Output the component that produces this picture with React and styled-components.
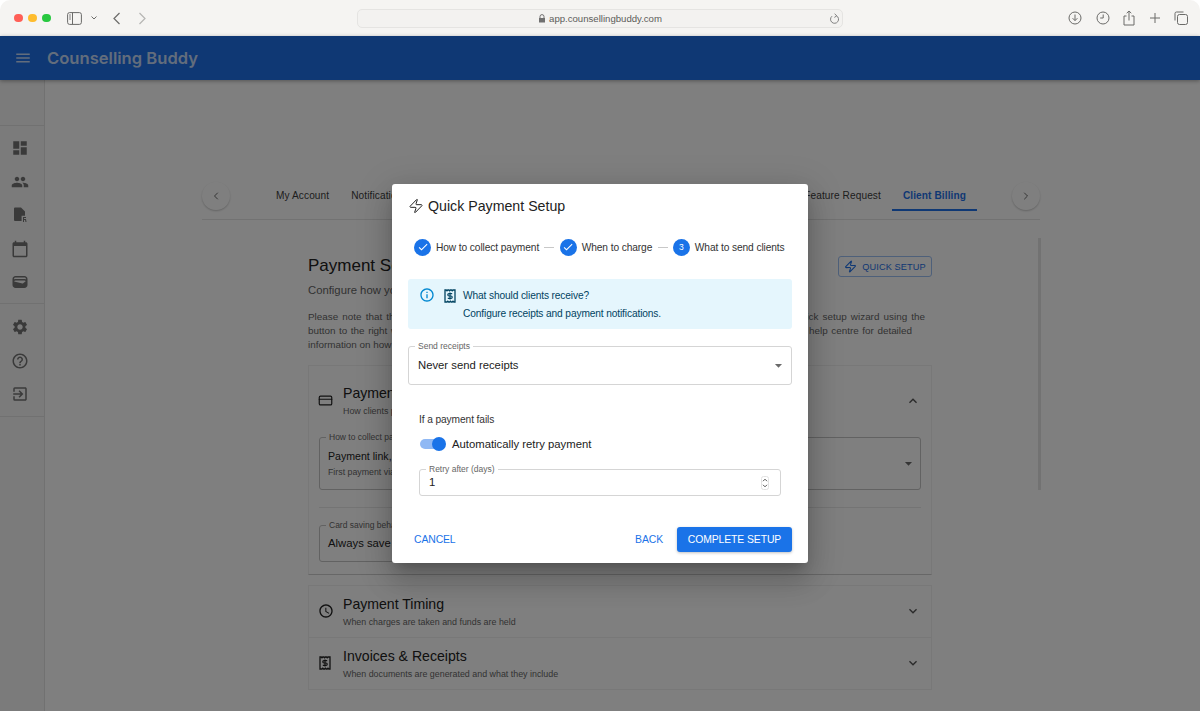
import styled, { createGlobalStyle } from 'styled-components';
import {
  MdDashboard,
  MdPeople,
  MdCalendarToday,
  MdWallet,
  MdSettings,
  MdHelpOutline,
  MdOutlineExitToApp,
  MdAccessTime,
  MdMenu,
  MdCheck,
  MdExpandMore,
  MdExpandLess,
  MdArrowDropDown,
  MdInfoOutline,
} from 'react-icons/md';
import { Zap, ChevronLeft, ChevronRight, CreditCard } from 'lucide-react';

const GlobalStyle = createGlobalStyle`
  html, body {
    margin: 0;
    padding: 0;
    background: #fff;
    overflow: hidden;
  }
  * { box-sizing: border-box; }
`;

const Window = styled.div`
  position: relative;
  width: 1200px;
  height: 711px;
  overflow: hidden;
  display: flex;
  flex-direction: column;
  font-family: "Liberation Sans", Arial, sans-serif;
  color: #222;
`;

/* safari chrome */
const Toolbar = styled.div`
  height: 36px;
  flex: none;
  display: grid;
  grid-template-columns: 357px 486px 357px;
  align-items: center;
  background: #f5f4f2;
  border-radius: 10px 10px 0 0;
`;

const ToolbarLeft = styled.div`
  display: flex;
  align-items: center;
  padding-left: 14px;
`;

const Dot = styled.span`
  width: 8.5px;
  height: 8.5px;
  border-radius: 50%;
  margin-right: 5.5px;
  background: ${props => props.color};
`;

const ChromeIcon = styled.svg`
  display: block;
  flex: none;
  margin-left: ${props => props.$left || 0}px;
  color: ${props => props.$faded ? '#b5b5b3' : '#6b6b69'};
`;

const UrlBar = styled.div`
  position: relative;
  height: 19px;
  display: flex;
  align-items: center;
  justify-content: center;
  gap: 3px;
  background: #f3f2f0;
  border: 1px solid #e5e4e2;
  border-radius: 5px;
  font-size: 9.6px;
  color: #5c5c5a;
`;

const Reload = styled.span`
  position: absolute;
  right: 2px;
  top: 3px;
  display: flex;
`;

const ToolbarRight = styled.div`
  display: flex;
  align-items: center;
  justify-content: flex-end;
  gap: 13.5px;
  padding-right: 12px;
`;

/* app */
const AppBar = styled.header`
  height: 44px;
  flex: none;
  display: flex;
  align-items: center;
  padding-left: 14px;
  gap: 15px;
  background: #1e70e8;
  color: rgba(255, 255, 255, 0.75);
  box-shadow: 0 1px 4px rgba(0, 0, 0, 0.35);
  z-index: 1;
`;

const Brand = styled.div`
  font-family: Inter, sans-serif;
  font-size: 16.6px;
  font-weight: 600;
`;

const Body = styled.div`
  flex: 1;
  display: flex;
  min-height: 0;
`;

const Sidebar = styled.nav`
  width: 45px;
  flex: none;
  padding-top: 45px;
  border-right: 1px solid #e2e2e2;
  background: #f6f6f6;
`;

const NavGroup = styled.div`
  display: flex;
  flex-direction: column;
  align-items: center;
  gap: 15.5px;
  padding: ${props => props.$last ? '14px 5px 13px 0' : '13px 5px 12px 0'};
  border-top: 1px solid #e2e2e2;
  border-bottom: ${props => props.$last ? '1px solid #e2e2e2' : 'none'};
  color: #757575;
  font-size: 18px;

  svg {
    display: block;
  }
`;

const Content = styled.main`
  position: relative;
  width: 838px;
  margin-left: 157px;
  padding-top: 102px;
`;

const TabBar = styled.div`
  height: 38px;
  display: flex;
  align-items: flex-start;
  border-bottom: 1px solid #e4e4e4;
`;

const RoundButton = styled.div`
  width: 28px;
  height: 28px;
  flex: none;
  margin: 0 0 0 ${props => props.$left}px;
  display: flex;
  align-items: center;
  justify-content: center;
  border-radius: 50%;
  box-shadow: 0 1px 2px rgba(0, 0, 0, 0.22);
  color: #444;
`;

const Tabs = styled.div`
  flex: 1;
  display: flex;
  padding: 0 0 0 35px;
`;

const Tab = styled.div`
  height: 29px;
  padding: 7px 11px 0;
  font-size: 10.1px;
  line-height: 13px;
  letter-spacing: 0.1px;
  white-space: nowrap;
  color: ${props => props.$active ? '#1e70e8' : '#3c3c3c'};
  font-weight: ${props => props.$active ? 700 : 400};
  border-bottom: 2px solid ${props => props.$active ? '#1e70e8' : 'transparent'};
`;

const TabSpacer = styled.div`
  flex: 1;
`;

const Scrollbar = styled.div`
  position: absolute;
  left: 836px;
  top: 158px;
  width: 3px;
  height: 252px;
  background: #e4e4e4;
`;

const Panel = styled.section`
  width: 624px;
  margin-left: 106px;
`;

const PanelHead = styled.div`
  display: flex;
  justify-content: space-between;
  padding-top: 35px;
  height: 60px;
`;

const PanelTitle = styled.h1`
  margin: 0;
  padding-top: 1px;
  font-size: 17px;
  line-height: 20px;
  font-weight: 400;
  color: #222;
`;

const OutlineButton = styled.div`
  width: 94px;
  height: 21px;
  margin-top: 1px;
  display: flex;
  align-items: center;
  justify-content: center;
  gap: 5px;
  border: 1px solid #9cc0f5;
  border-radius: 3px;
  font-size: 9.2px;
  letter-spacing: 0.1px;
  color: #1e70e8;
`;

const Subtitle = styled.div`
  margin-top: 2px;
  font-size: 11.3px;
  line-height: 16px;
  color: #666;
`;

const Note = styled.div`
  margin-top: 12px;
  font-size: 9.9px;
  line-height: 14px;
  color: #666;
`;

const NoteLine = styled.div`
  width: ${props => props.$width}px;
  white-space: nowrap;
  text-align: justify;
  text-align-last: ${props => props.$width ? 'justify' : 'left'};
`;

const Accordion = styled.div`
  border: 1px solid #f1f1f1;
  border-bottom: ${props => props.$open ? '1px solid #cfcfcf' : '1px solid #f1f1f1'};
  border-top: ${props => props.$stacked ? 'none' : '1px solid #f1f1f1'};
  margin-top: ${props => props.$stacked ? 0 : props.$gap}px;
`;

const AccordionHead = styled.div`
  height: ${props => props.$height || 51}px;
  display: flex;
  align-items: center;
  padding: 0 10px 0 9px;
  color: #222;
`;

const AccordionIcon = styled.span`
  width: 25px;
  flex: none;
  display: flex;
  margin-bottom: 2px;
  font-size: 16px;
`;

const AccordionText = styled.div`
  flex: 1;
  margin-bottom: ${props => props.$lift ? 2 : 0}px;
`;

const AccordionTitle = styled.div`
  font-size: 14.1px;
  line-height: 18px;
  color: #222;
`;

const AccordionSub = styled.div`
  font-size: 8.9px;
  line-height: 12px;
  margin-top: 3px;
  color: #666;
`;

const AccordionToggle = styled.span`
  display: flex;
  margin-bottom: 2px;
  font-size: 16px;
  color: #555;
`;

const AccordionBody = styled.div`
  padding: 0 10px 12px;
`;

const FieldValue = styled.div`
  flex: 1;
  font-size: ${props => props.$size || 11.3}px;
  line-height: 14px;
  color: #222;
`;

const Outlined = styled.div`
  position: relative;
  display: flex;
  align-items: center;
  width: ${props => props.$width ? `${props.$width}px` : 'auto'};
  height: ${props => props.$height}px;
  padding: 0 ${props => props.$right || 10}px 0 ${props => props.$left || 9}px;
  border: 1px solid ${props => props.$light ? '#d5d5d5' : '#c4c4c4'};
  border-radius: 3px;

  & > ${FieldValue} {
    margin-bottom: 2px;
  }
`;

const FieldLabel = styled.span`
  position: absolute;
  left: 6px;
  top: -6px;
  padding: 0 3px;
  background: #fff;
  font-size: 8.5px;
  line-height: 11px;
  color: #666;
`;

const FieldStack = styled.div`
  flex: 1;
`;

const FieldHint = styled.div`
  margin-top: 3px;
  font-size: 8.8px;
  line-height: 12px;
  color: #666;
`;

const Divider = styled.div`
  height: 1px;
  margin: 17px 0;
  background: #e8e8e8;
`;

const DropArrow = styled.span`
  display: flex;
  font-size: 17px;
  color: #6a6a6a;
`;

/* dialog */
const Backdrop = styled.div`
  position: absolute;
  inset: 36px 0 0;
  z-index: 5;
  display: flex;
  align-items: center;
  justify-content: center;
  background: rgba(0, 0, 0, 0.5);
`;

const Dialog = styled.div`
  width: 416px;
  height: 379px;
  padding: 0 16px;
  background: #fff;
  border-radius: 3px;
  box-shadow: 0 8px 11px -5px rgba(0, 0, 0, 0.2), 0 18px 28px 2px rgba(0, 0, 0, 0.14), 0 7px 34px 6px rgba(0, 0, 0, 0.12);
`;

const DialogTitle = styled.h2`
  margin: 0;
  height: 44px;
  display: flex;
  align-items: center;
  gap: 4px;
  font-size: 14.2px;
  line-height: 18px;
  font-weight: 400;
  color: #222;
`;

const Stepper = styled.div`
  margin-top: 10px;
  height: 18px;
  padding-left: 6px;
  display: flex;
  align-items: center;
`;

const StepCircle = styled.span`
  width: 17px;
  height: 17px;
  flex: none;
  display: flex;
  align-items: center;
  justify-content: center;
  margin-right: 5px;
  border-radius: 50%;
  background: #1a73e8;
  color: #fff;
  font-size: 8.5px;
`;

const StepLabel = styled.span`
  font-size: 10.2px;
  letter-spacing: -0.1px;
  color: #333;
  white-space: nowrap;
`;

const StepLine = styled.span`
  width: 10px;
  height: 1px;
  margin: 0 5.3px;
  background: #c8c8c8;
`;

const Alert = styled.div`
  margin-top: 23px;
  height: 50px;
  padding: 8px 0 0 11px;
  display: flex;
  background: #e5f6fd;
  border-radius: 3px;
  color: #014361;
  font-size: 10.2px;
  letter-spacing: -0.13px;
  line-height: 17.5px;
`;

const AlertIcon = styled.span`
  display: flex;
  height: 16px;
  padding-top: ${props => props.$top || 0}px;
  margin-right: ${props => props.$gap}px;
  color: ${props => props.$tint || '#014361'};
  font-size: 16px;
`;

const Fields = styled.div`
  margin-top: 17px;
`;

const RetrySection = styled.div`
  padding: 29px 11px 0;
`;

const SectionLabel = styled.div`
  font-size: 10.2px;
  letter-spacing: -0.1px;
  line-height: 12px;
  color: #333;
`;

const SwitchRow = styled.div`
  margin-top: 10px;
  height: 16px;
  display: flex;
  align-items: center;
  gap: 7px;
  font-size: 11.3px;
  color: #222;
`;

const SwitchTrack = styled.span`
  position: relative;
  width: 25px;
  height: 10px;
  margin-left: 1px;
  border-radius: 5px;
  background: #8fb8f4;
`;

const SwitchThumb = styled.span`
  position: absolute;
  right: -1px;
  top: -2px;
  width: 14px;
  height: 14px;
  border-radius: 50%;
  background: #1a73e8;
`;

const RetryField = styled.div`
  margin-top: 17px;
`;

const Spinner = styled.svg`
  display: block;
  flex: none;
`;

const Actions = styled.div`
  margin-top: 31px;
  display: flex;
  align-items: center;
  padding-left: 6px;
  font-size: 10.4px;
  letter-spacing: -0.1px;
`;

const TextButton = styled.span`
  color: #1a73e8;
  margin-right: ${props => props.$right || 0}px;
  margin-left: ${props => props.$push ? 'auto' : 0};
`;

const PrimaryButton = styled.span`
  width: 115px;
  height: 25px;
  display: flex;
  align-items: center;
  justify-content: center;
  background: #1a73e8;
  color: #fff;
  border-radius: 3px;
  box-shadow: 0 1px 3px rgba(0, 0, 0, 0.25);
`;

const SidebarToggle = () => (
  <ChromeIcon $left={11} width="15" height="13" viewBox="0 0 15 13" fill="none" stroke="currentColor">
    <rect x="0.6" y="0.6" width="13.8" height="11.8" rx="2" />
    <path d="M5.5 0.6v11.8" />
    <path d="M2 3h2M2 5h2M2 7h2" strokeWidth="0.8" />
  </ChromeIcon>
);

const Chevron = ({ d, left, w = 8, h = 13, faded, sw = 1.2 }) => (
  <ChromeIcon $left={left} $faded={faded} width={w} height={h} viewBox={`0 0 ${w} ${h}`} fill="none" stroke="currentColor" strokeWidth={sw}>
    <path d={d} />
  </ChromeIcon>
);

const Glyph = ({ children, w = 14, h = 14 }) => (
  <ChromeIcon width={w} height={h} viewBox={`0 0 ${w} ${h}`} fill="none" stroke="currentColor" strokeWidth="1">
    {children}
  </ChromeIcon>
);

const QuoteIcon = ({ size = 14 }) => (
  <svg width={size} height={size} viewBox="0 0 14 14" fill="none" stroke="currentColor">
    <path d="M2 1h1.2l.8.8.8-.8h1l.8.8.8-.8h1l.8.8.8-.8H12v12h-1.2l-.8-.8-.8.8h-1l-.8-.8-.8.8h-1l-.8-.8-.8.8H2z" strokeWidth="1.3" />
    <path d="M9.2 4.6H6a1 1 0 0 0 0 2.4h2a1 1 0 0 1 0 2.4H4.8M7 3.4v7.2" strokeWidth="1.2" />
  </svg>
);

const FileIcon = () => (
  <svg width="18" height="18" viewBox="0 0 18 18" fill="currentColor">
    <path d="M4 1.5h6l4 4v4.2h-3.4V15H4a1 1 0 0 1-1-1V2.5a1 1 0 0 1 1-1z" />
    <path d="M12 11h3v1h-2v1h2l.5 3h-1l-.4-2H13v2h-1z" />
  </svg>
);

const App = () => (
  <Window>
    <GlobalStyle />
    <Toolbar>
      <ToolbarLeft>
        <Dot color="#ff5f57" />
        <Dot color="#febc2e" />
        <Dot color="#28c840" />
        <SidebarToggle />
        <Chevron left={9} w={6} h={4} d="M0.5 0.5l2.5 2.5 2.5-2.5" sw={1} />
        <Chevron left={16} d="M6.5 1L1 6.5 6.5 12" />
        <Chevron left={17} faded d="M1.5 1L7 6.5 1.5 12" />
      </ToolbarLeft>
      <UrlBar>
        <svg width="8" height="9" viewBox="0 0 8 9" fill="#707070">
          <path d="M1 4h6v4.5H1z" />
          <path d="M2 4V2.6a2 2 0 0 1 4 0V4" fill="none" stroke="#707070" />
        </svg>
        app.counsellingbuddy.com
        <Reload>
          <svg width="11" height="12" viewBox="0 0 11 12" fill="none" stroke="#808080">
            <path d="M7.5 2.8A4 4 0 1 1 3 3.2" />
            <path d="M3.6 1l2.2 2-2.4 1.6" transform="translate(2 -.2)" />
          </svg>
        </Reload>
      </UrlBar>
      <ToolbarRight>
        <Glyph>
          <circle cx="7" cy="7" r="6" />
          <path d="M7 3.5v6M4.6 7.2L7 9.6l2.4-2.4" />
        </Glyph>
        <Glyph>
          <circle cx="7" cy="7" r="6" />
          <path d="M7.2 3.5V7H4.2" />
        </Glyph>
        <Glyph w={12} h={16}>
          <path d="M3.5 6H1v9h10V6H8.5" />
          <path d="M6 10.5V1M3.7 3.2L6 1l2.3 2.2" />
        </Glyph>
        <Glyph w={12} h={12}>
          <path d="M6 1v10M1 6h10" />
        </Glyph>
        <Glyph w={14} h={14}>
          <rect x="3.5" y="3.5" width="10" height="10" rx="2" />
          <path d="M1 9.5V2.5A1.5 1.5 0 0 1 2.5 1h7" />
        </Glyph>
      </ToolbarRight>
    </Toolbar>

    <AppBar>
      <MdMenu size={18} />
      <Brand>Counselling Buddy</Brand>
    </AppBar>

    <Body>
      <Sidebar>
        <NavGroup>
          <MdDashboard />
          <MdPeople />
          <FileIcon />
          <MdCalendarToday />
          <MdWallet />
        </NavGroup>
        <NavGroup $last>
          <MdSettings />
          <MdHelpOutline />
          <MdOutlineExitToApp />
        </NavGroup>
      </Sidebar>

      <Content>
        <TabBar>
          <RoundButton $left={0}><ChevronLeft size={12} strokeWidth={1.6} /></RoundButton>
          <Tabs>
            <Tab>My Account</Tab>
            <Tab>Notifications</Tab>
            <TabSpacer />
            <Tab>Feature Request</Tab>
            <Tab $active>Client Billing</Tab>
          </Tabs>
          <RoundButton $left={35}><ChevronRight size={12} strokeWidth={1.6} /></RoundButton>
        </TabBar>
        <Scrollbar />

        <Panel>
          <PanelHead>
            <PanelTitle>Payment Setup</PanelTitle>
            <OutlineButton><Zap size={13} />QUICK SETUP</OutlineButton>
          </PanelHead>
          <Subtitle>Configure how you collect payments from your clients</Subtitle>
          <Note>
            <NoteLine $width={617}>Please note that these settings apply to all of your clients by default, so you can easily get going with the quick setup wizard using the</NoteLine>
            <NoteLine $width={604}>button to the right which walks you through each of the options below one at a time, or you can visit our online help centre for detailed</NoteLine>
            <NoteLine>information on how each option works.</NoteLine>
          </Note>

          <Accordion $open $gap={13}>
            <AccordionHead $height={71}>
              <AccordionIcon><CreditCard size={15} strokeWidth={1.9} /></AccordionIcon>
              <AccordionText $lift>
                <AccordionTitle>Payment Method</AccordionTitle>
                <AccordionSub>How clients pay for their sessions</AccordionSub>
              </AccordionText>
              <AccordionToggle><MdExpandLess /></AccordionToggle>
            </AccordionHead>
            <AccordionBody>
              <Outlined $height={53} $right={3} $left={8}>
                <FieldLabel>How to collect payment</FieldLabel>
                <FieldStack>
                  <FieldValue $size={10.6}>Payment link, then saved card</FieldValue>
                  <FieldHint>First payment via link, then charged automatically</FieldHint>
                </FieldStack>
                <DropArrow><MdArrowDropDown /></DropArrow>
              </Outlined>
              <Divider />
              <Outlined $height={37} $width={295} $left={8}>
                <FieldLabel>Card saving behaviour</FieldLabel>
                <FieldValue>Always save card</FieldValue>
              </Outlined>
            </AccordionBody>
          </Accordion>

          <Accordion $gap={10}>
            <AccordionHead>
              <AccordionIcon><MdAccessTime /></AccordionIcon>
              <AccordionText>
                <AccordionTitle>Payment Timing</AccordionTitle>
                <AccordionSub>When charges are taken and funds are held</AccordionSub>
              </AccordionText>
              <AccordionToggle><MdExpandMore /></AccordionToggle>
            </AccordionHead>
          </Accordion>
          <Accordion $stacked>
            <AccordionHead>
              <AccordionIcon><QuoteIcon size={14} /></AccordionIcon>
              <AccordionText>
                <AccordionTitle>Invoices &amp; Receipts</AccordionTitle>
                <AccordionSub>When documents are generated and what they include</AccordionSub>
              </AccordionText>
              <AccordionToggle><MdExpandMore /></AccordionToggle>
            </AccordionHead>
          </Accordion>
        </Panel>
      </Content>
    </Body>

    <Backdrop>
      <Dialog>
        <DialogTitle>
          <Zap size={16} strokeWidth={1.5} />
          Quick Payment Setup
        </DialogTitle>
        <Stepper>
          <StepCircle><MdCheck size={12} /></StepCircle>
          <StepLabel>How to collect payment</StepLabel>
          <StepLine />
          <StepCircle><MdCheck size={12} /></StepCircle>
          <StepLabel>When to charge</StepLabel>
          <StepLine />
          <StepCircle>3</StepCircle>
          <StepLabel>What to send clients</StepLabel>
        </Stepper>
        <Alert>
          <AlertIcon $gap={8} $tint="#0288d1"><MdInfoOutline /></AlertIcon>
          <AlertIcon $gap={6} $top={2}><QuoteIcon size={14} /></AlertIcon>
          <div>
            What should clients receive?<br />
            Configure receipts and payment notifications.
          </div>
        </Alert>
        <Fields>
          <Outlined $height={39} $right={4} $light>
            <FieldLabel>Send receipts</FieldLabel>
            <FieldValue>Never send receipts</FieldValue>
            <DropArrow><MdArrowDropDown /></DropArrow>
          </Outlined>
        </Fields>
        <RetrySection>
          <SectionLabel>If a payment fails</SectionLabel>
          <SwitchRow>
            <SwitchTrack><SwitchThumb /></SwitchTrack>
            Automatically retry payment
          </SwitchRow>
          <RetryField>
            <Outlined $height={27} $light $right={11}>
              <FieldLabel>Retry after (days)</FieldLabel>
              <FieldValue>1</FieldValue>
              <Spinner width="8" height="14" viewBox="0 0 8 14" fill="none" stroke="#555">
                <rect x="0.5" y="0.5" width="7" height="13" rx="2" stroke="#e2e2e2" />
                <path d="M2 5.2l2-2 2 2M2 8.8l2 2 2-2" />
              </Spinner>
            </Outlined>
          </RetryField>
        </RetrySection>
        <Actions>
          <TextButton>CANCEL</TextButton>
          <TextButton $push $right={14}>BACK</TextButton>
          <PrimaryButton>COMPLETE SETUP</PrimaryButton>
        </Actions>
      </Dialog>
    </Backdrop>
  </Window>
);

export default App;
